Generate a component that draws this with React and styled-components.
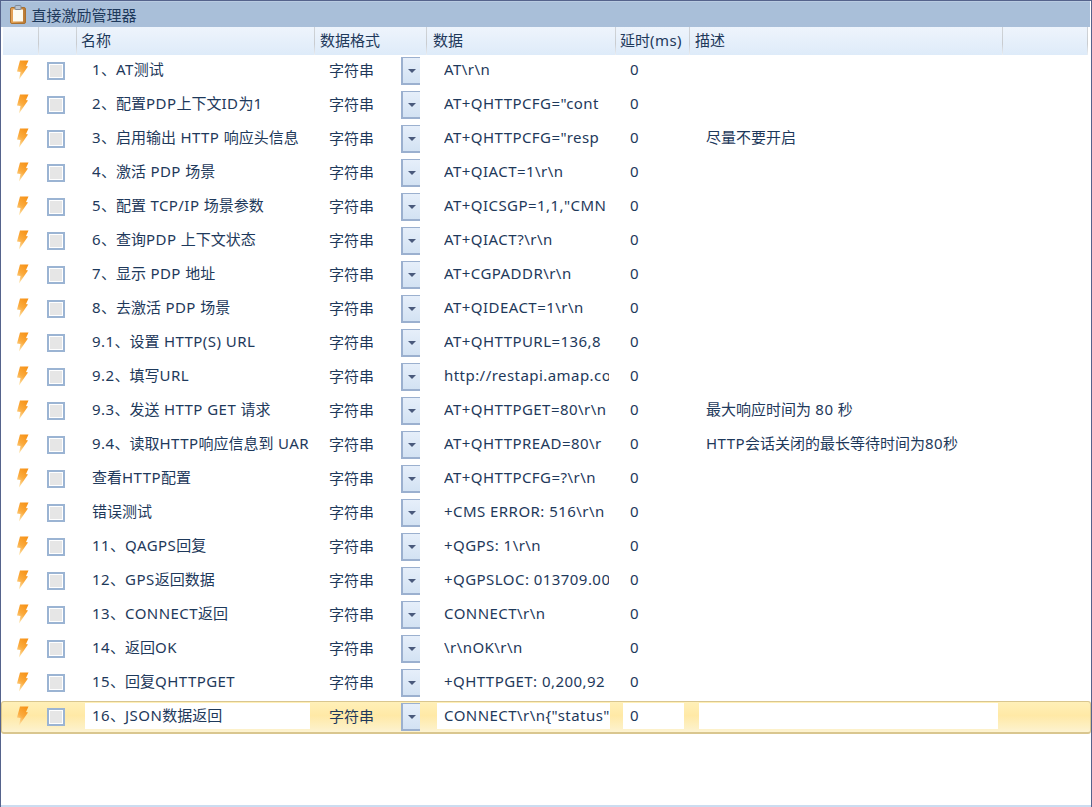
import React from 'react';
import styled, { createGlobalStyle } from 'styled-components';

const GlobalStyle = createGlobalStyle`
  html, body {
    margin: 0;
    padding: 0;
    background: #fff;
  }
  body {
    font-family: "Noto Sans", "Noto Sans CJK SC", sans-serif;
    font-size: 15px;
    color: #1e395b;
  }
`;

const COLUMNS = '36px 38px 238px 112px 189px 74px 313px 85px';

const Frame = styled.div`
  box-sizing: border-box;
  width: 1092px;
  height: 807px;
  display: flex;
  flex-direction: column;
  overflow: hidden;
  background: #fff;
  border: 1px solid #55638c;
  border-bottom: none;
  border-left-width: 1.5px;
`;

const TitleBar = styled.div`
  flex: none;
  height: 26px;
  display: flex;
  align-items: center;
  gap: 6px;
  padding-left: 8.5px;
  margin-right: 1px;
  background: #a9bfd9;
  border-top: 1px solid #b9cbe1;
  box-sizing: border-box;
`;

const HeaderRow = styled.div`
  flex: none;
  display: grid;
  grid-template-columns: ${COLUMNS};
  height: 28px;
  padding-left: 2px;
`;

const HeaderCell = styled.div`
  box-sizing: border-box;
  line-height: 27px;
  padding-left: ${p => p.$indent || 0}px;
  background: linear-gradient(#eef4fc, #deebf9);
  border-right: 1px solid;
  border-image: linear-gradient(#d0d4d9, #c9ccd0 60%, #eef2f7) 1;
  white-space: nowrap;
`;

const Body = styled.div`
  flex: 1;
  display: flex;
  flex-direction: column;
`;

const Row = styled.div`
  flex: none;
  box-sizing: border-box;
  display: grid;
  grid-template-columns: ${COLUMNS};
  height: ${p => (p.$selected ? 33 : 34)}px;
  padding-left: 2px;
  ${p => p.$selected && `
    border: 1px solid #d9c68f;
    border-bottom-width: 2px;
    border-radius: 3px;
    padding-left: 1px;
    background: linear-gradient(#fff0b8 0%, #ffe9a6 45%, #fdf0c4 85%, #fdf3d2 100%);
  `}
`;

const IconCell = styled.div`
  padding: ${p => (p.$selected ? 4 : 5)}px 0 0 13px;
  line-height: 0;
`;

const CheckCell = styled.div`
  padding: ${p => (p.$selected ? 6 : 7)}px 0 0 8px;
  line-height: 0;
`;

const CheckBox = styled.span`
  display: block;
  box-sizing: border-box;
  width: 18px;
  height: 18px;
  border: 2px solid #9bb4d3;
  background: #e6e6e6;
  box-shadow: inset 0 0 0 1px #fff;
`;

const Field = styled.div`
  box-sizing: border-box;
  height: 26px;
  line-height: 24px;
  margin: ${p => (p.$selected ? 1 : 2)}px ${p => p.$right}px 0 ${p => p.$left}px;
  padding: 0 ${p => p.$clip}px 0 7px;
  background: ${p => (p.$selected ? '#fff' : 'transparent')};
`;

const FieldText = styled.span`
  display: block;
  overflow: hidden;
  white-space: nowrap;
`;

// latin runs in the reference font sit a bit wider than Noto Sans
const Latin = styled.span`
  letter-spacing: 0.45px;
`;

const FormatCell = styled.div`
  display: flex;
  align-items: flex-start;
  padding: 0 7px 0 14px;
`;

const FormatText = styled.span`
  line-height: 30px;
  margin-top: ${p => (p.$selected ? -1 : 0)}px;
`;

const DropButton = styled.button`
  box-sizing: border-box;
  width: 19px;
  height: 28px;
  padding: 0;
  margin: ${p => (p.$selected ? 1 : 2)}px 0 0 auto;
  display: flex;
  align-items: center;
  justify-content: center;
  background: linear-gradient(#e6effa, #d3e2f3);
  border: none;
  border-top: 1px solid #9bb0cf;
  border-bottom: 2px solid #9bb0cf;
  border-left: 2px solid #9bb0cf;
`;

const Caret = styled.span`
  width: 0;
  height: 0;
  border-left: 4px solid transparent;
  border-right: 4px solid transparent;
  border-top: 4px solid #4a5a7c;
`;

const FootLine = styled.div`
  flex: none;
  height: 2px;
  background: #cbdcf0;
`;

const BoardIcon = () => (
  <svg width="16" height="19" viewBox="0 0 16 19">
    <defs>
      <linearGradient id="board" x1="0" y1="0" x2="1" y2="0">
        <stop offset="0" stopColor="#e9a556" />
        <stop offset="1" stopColor="#b97a35" />
      </linearGradient>
    </defs>
    <rect x="0.5" y="2.5" width="15" height="16" rx="1.5" fill="url(#board)" stroke="#a8702f" />
    <rect x="3" y="4.5" width="10" height="12" fill="#fdfbf0" />
    <rect x="5" y="0.5" width="6" height="4" rx="1" fill="#b9c3d0" stroke="#7f8a99" />
  </svg>
);

const BoltIcon = ({ id }) => (
  <svg width="13" height="20" viewBox="0 0 13 20">
    <defs>
      <linearGradient id={id} x1="0.7" y1="0" x2="0.2" y2="1">
        <stop offset="0" stopColor="#f7941a" />
        <stop offset="0.5" stopColor="#fbab3e" />
        <stop offset="1" stopColor="#fde6b0" />
      </linearGradient>
    </defs>
    <path d="M4 0.5 L12.5 0.5 L10 6 L12 6.5 L3 19.5 L4.5 12 L1 11.5 Z" fill={`url(#${id})`} />
  </svg>
);

const CJK_RUN = /([\u3000-\u9fff]+)/;

const Mixed = ({ text }) =>
  text.split(CJK_RUN).map((part, i) =>
    CJK_RUN.test(part) ? part : <Latin key={i}>{part}</Latin>
  );

// long values are cut by their column, only the part that shows is listed
const rows = [
  ['1、AT测试', 'AT\\r\\n'],
  ['2、配置PDP上下文ID为1', 'AT+QHTTPCFG="cont'],
  ['3、启用输出 HTTP 响应头信息', 'AT+QHTTPCFG="resp', '尽量不要开启'],
  ['4、激活 PDP 场景', 'AT+QIACT=1\\r\\n'],
  ['5、配置 TCP/IP 场景参数', 'AT+QICSGP=1,1,"CMN'],
  ['6、查询PDP 上下文状态', 'AT+QIACT?\\r\\n'],
  ['7、显示 PDP 地址', 'AT+CGPADDR\\r\\n'],
  ['8、去激活 PDP 场景', 'AT+QIDEACT=1\\r\\n'],
  ['9.1、设置 HTTP(S) URL', 'AT+QHTTPURL=136,8'],
  ['9.2、填写URL', 'http://restapi.amap.co'],
  ['9.3、发送 HTTP GET 请求', 'AT+QHTTPGET=80\\r\\n', '最大响应时间为 80 秒'],
  ['9.4、读取HTTP响应信息到 UAR', 'AT+QHTTPREAD=80\\r', 'HTTP会话关闭的最长等待时间为80秒'],
  ['查看HTTP配置', 'AT+QHTTPCFG=?\\r\\n'],
  ['错误测试', '+CMS ERROR: 516\\r\\n'],
  ['11、QAGPS回复', '+QGPS: 1\\r\\n'],
  ['12、GPS返回数据', '+QGPSLOC: 013709.00'],
  ['13、CONNECT返回', 'CONNECT\\r\\n'],
  ['14、返回OK', '\\r\\nOK\\r\\n'],
  ['15、回复QHTTPGET', '+QHTTPGET: 0,200,92'],
  ['16、JSON数据返回', 'CONNECT\\r\\n{"status"', '', true],
];

const App = () => (
  <Frame>
    <GlobalStyle />
    <TitleBar>
      <BoardIcon />
      直接激励管理器
    </TitleBar>
    <HeaderRow>
      <HeaderCell />
      <HeaderCell />
      <HeaderCell $indent={4}>名称</HeaderCell>
      <HeaderCell $indent={5}>数据格式</HeaderCell>
      <HeaderCell $indent={6}>数据</HeaderCell>
      <HeaderCell $indent={4}><Mixed text="延时(ms)" /></HeaderCell>
      <HeaderCell $indent={5}>描述</HeaderCell>
      <HeaderCell />
    </HeaderRow>
    <Body>
      {rows.map(([name, data, note, selected], i) => (
        <Row key={name} $selected={selected}>
          <IconCell $selected={selected}><BoltIcon id={`bolt${i}`} /></IconCell>
          <CheckCell $selected={selected}><CheckBox /></CheckCell>
          <Field $selected={selected} $left={8} $right={5} $clip={0}>
            <FieldText><Mixed text={name} /></FieldText>
          </Field>
          <FormatCell>
            <FormatText $selected={selected}>字符串</FormatText>
            <DropButton $selected={selected}><Caret /></DropButton>
          </FormatCell>
          <Field $selected={selected} $left={10} $right={6} $clip={1}>
            <FieldText><Mixed text={data} /></FieldText>
          </Field>
          <Field $selected={selected} $left={7} $right={6} $clip={0}>
            <FieldText>0</FieldText>
          </Field>
          <Field $selected={selected} $left={9} $right={5} $clip={0}>
            <FieldText><Mixed text={note || ''} /></FieldText>
          </Field>
        </Row>
      ))}
    </Body>
    <FootLine />
  </Frame>
);

export default App;
